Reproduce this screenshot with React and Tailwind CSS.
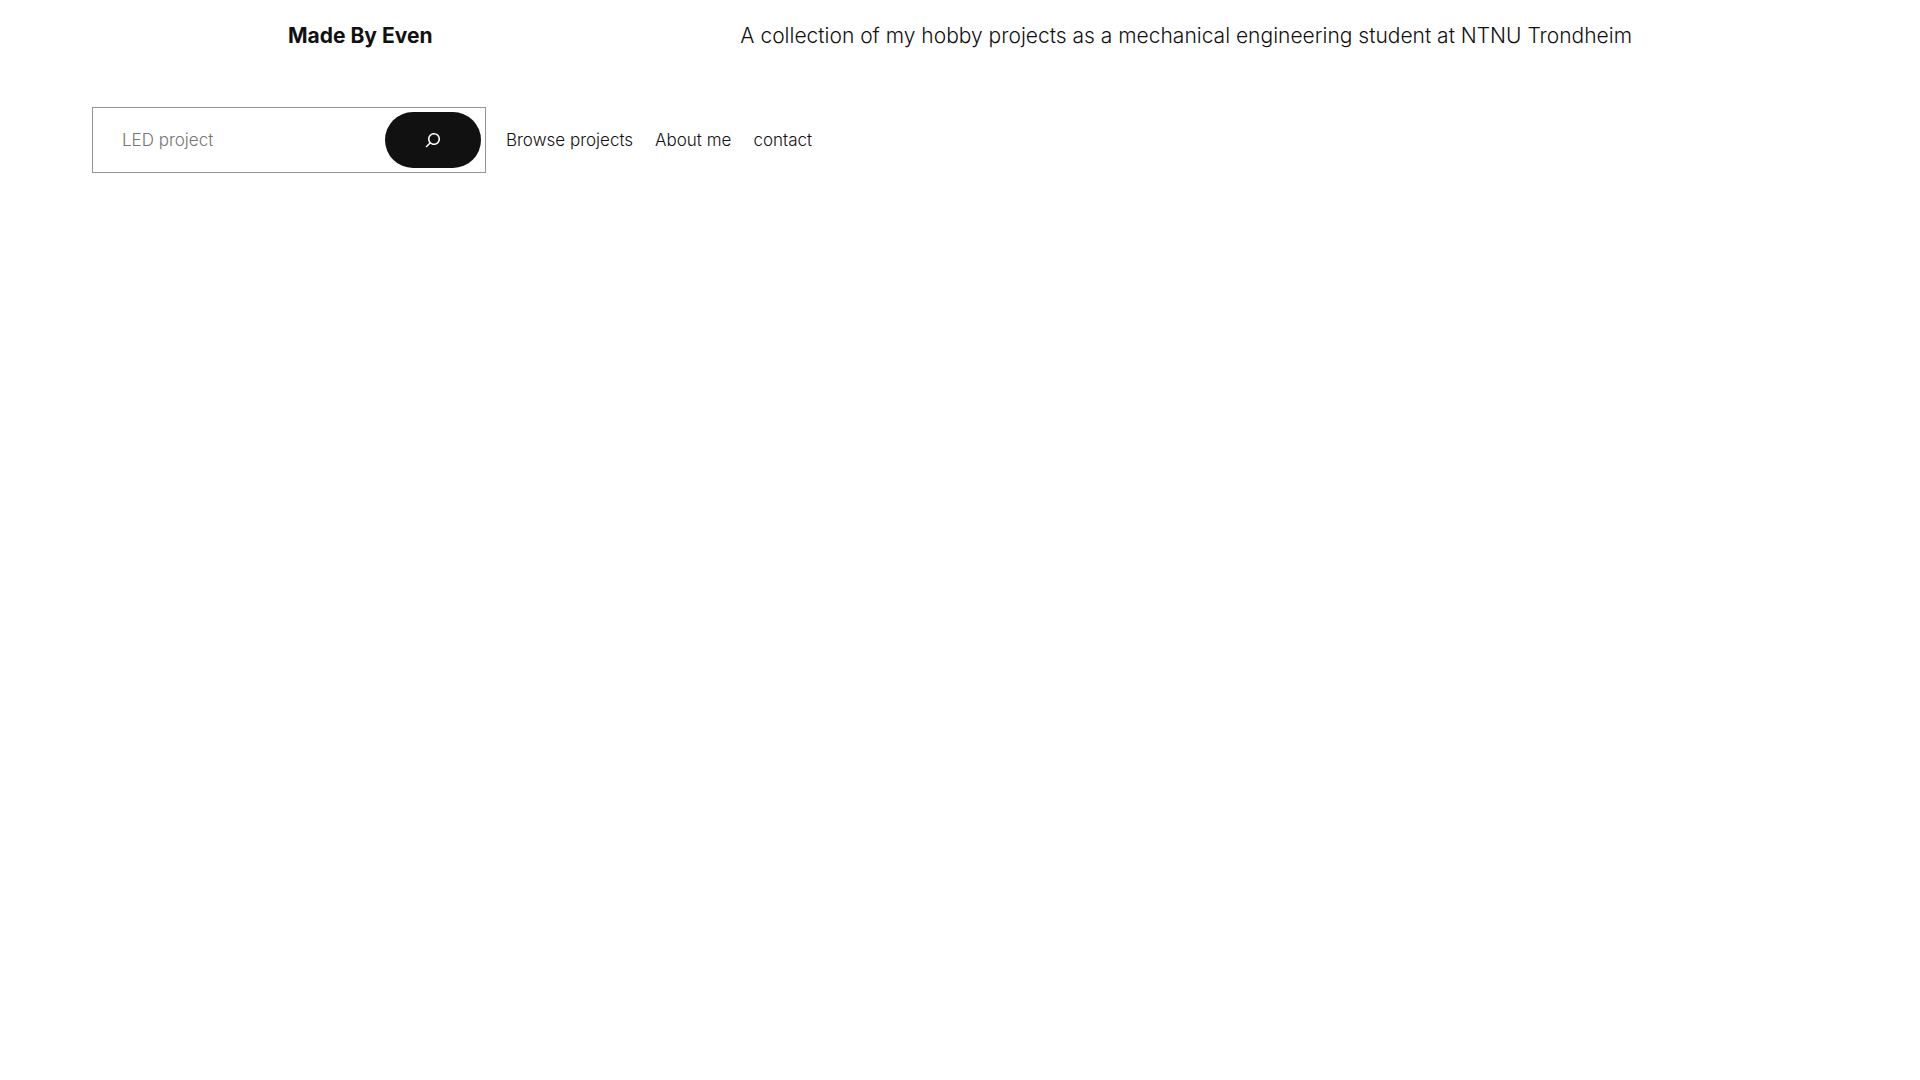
import React, { useState } from 'react';

const links = [
    { label: 'Browse projects', href: '#projects' },
    { label: 'About me', href: '#about' },
    { label: 'contact', href: '#contact' },
];

const SearchIcon = () => (
    <svg viewBox="0 0 24 24" className="w-6 h-6 fill-current" aria-hidden="true">
        <path d="M13 5c-3.3 0-6 2.7-6 6 0 1.4.5 2.7 1.3 3.7l-3.8 3.8 1.1 1.1 3.8-3.8c1 .8 2.3 1.3 3.7 1.3 3.3 0 6-2.7 6-6S16.3 5 13 5zm0 10.5c-2.5 0-4.5-2-4.5-4.5s2-4.5 4.5-4.5 4.5 2 4.5 4.5-2 4.5-4.5 4.5z" />
    </svg>
);

const SearchForm = () => {
    const [query, setQuery] = useState('');

    return (
        <form
            role="search"
            onSubmit={(e) => e.preventDefault()}
            className="flex w-[394px] max-w-full border border-[#949494] p-1"
        >
            <input
                type="search"
                aria-label="Search"
                value={query}
                onChange={(e) => setQuery(e.target.value)}
                placeholder="LED project"
                className="min-w-0 flex-1 pl-[25px] pr-4 text-[17px] font-light placeholder:text-[#757575] focus:outline-none"
            />
            <button
                type="submit"
                aria-label="Search"
                className="flex h-14 w-24 shrink-0 items-center justify-center rounded-full bg-[#111111] text-white"
            >
                <SearchIcon />
            </button>
        </form>
    );
};

const App = () => {
    return (
        <div className="min-h-screen bg-white font-['Inter',sans-serif] font-light text-[#111111]">
            <header>
                <div className="flex flex-wrap items-center justify-between px-[15%] pt-5 text-[21px] leading-8">
                    <h1 className="font-bold">
                        <a href="#home">Made By Even</a>
                    </h1>
                    <p>A collection of my hobby projects as a mechanical engineering student at NTNU Trondheim</p>
                </div>
                <nav className="mt-[55px] flex flex-wrap items-center gap-5 px-[92px] text-[17px] leading-7">
                    <SearchForm />
                    <ul className="flex flex-wrap gap-[22px]">
                        {links.map((link) => (
                            <li key={link.href}>
                                <a href={link.href}>{link.label}</a>
                            </li>
                        ))}
                    </ul>
                </nav>
            </header>
        </div>
    );
};

export default App;
